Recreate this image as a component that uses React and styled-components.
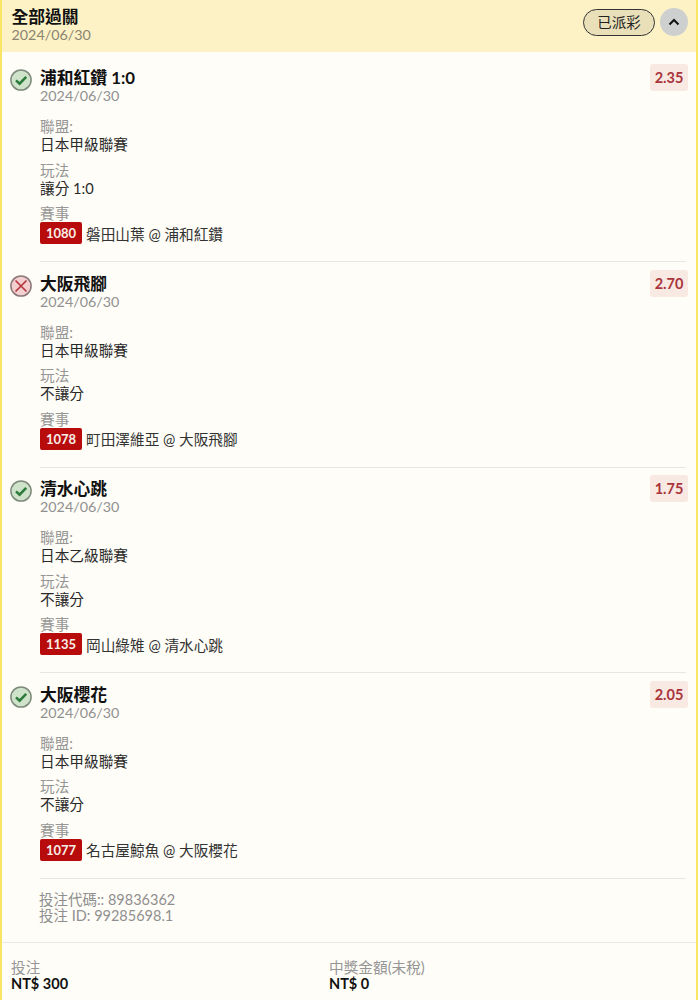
import React from "react";
import styled, { createGlobalStyle } from "styled-components";

const Global = createGlobalStyle`
  html, body { margin: 0; padding: 0; background: #fffdf7; }
  body { font-family: Lato, "Noto Sans CJK TC", sans-serif; }
`;
const Card = styled.div`
  width: 698px; height: 1000px; box-sizing: border-box; overflow: hidden;
  border-left: 2px solid #f9e463; border-right: 2px solid #f9e463;
  background: #fffdf7;
`;
const Header = styled.div`
  height: 52px; box-sizing: border-box; background: #fdf1c6;
  padding: 7px 8px 0 9.5px; display: flex; justify-content: space-between;
`;
const HeadTitle = styled.div`font-size: 16.8px; line-height: 20px; font-weight: 700; color: #111;`;
const HeadDate = styled.div`font-size: 14.3px; line-height: 16px; color: #8a8470;`;
const HeadRight = styled.div`display: flex; align-items: center; gap: 5px; height: 30px;`;
const Pill = styled.div`
  width: 72px; height: 27px; box-sizing: border-box; border: 1px solid #333; border-radius: 14px;
  background: #e9e0ba; font-size: 14.5px; line-height: 25px; text-align: center; color: #222;
`;
const Toggle = styled.div`
  width: 28px; height: 28px; border-radius: 50%; background: #ced0cf;
  display: flex; align-items: center; justify-content: center;
`;
const List = styled.div`padding: 16px 8px 0 8px;`;
const Item = styled.div`
  display: flex; gap: 8px; padding-bottom: 17px;
`;
const Badge = styled.div`width: 22px; flex: none; padding-top: 1px; height: 22px;`;
const Body = styled.div`flex: 1; min-width: 0;`;
const TitleRow = styled.div`display: flex; justify-content: space-between;`;
const Title = styled.div`font-size: 16.8px; line-height: 20px; font-weight: 700; color: #111;`;
const Odds = styled.div`
  background: #f8e9e2; color: #a8343c; font-size: 14.5px; font-weight: 700;
  height: 27px; line-height: 27px; padding: 0 4px; width: 30px; text-align: center;
  border-radius: 3px; margin-top: -4px; margin-bottom: -4px;
`;
const DateText = styled.div`font-size: 14.3px; line-height: 16px; color: #909090; margin-bottom: 14px;`;
const Label = styled.div`font-size: 14.67px; line-height: 17px; color: #969696;`;
const Value = styled.div`font-size: 14.67px; line-height: 19px; color: #2a2a2a; margin-bottom: 7.5px;`;
const Game = styled.div`display: flex; align-items: center; gap: 4px; font-size: 14.67px; color: #333; height: 22px;`;
const Code = styled.span`
  background: #b80c0c; color: #f8eee8; font-size: 13px; font-weight: 700; width: 42px; height: 22px;
  line-height: 22px; text-align: center; border-radius: 2px; display: inline-block;
`;
const Divider = styled.div`height: 1px; background: #e8e6e0; margin: 0 2px 11.67px 30px;`;
const Meta = styled.div`padding: 1px 0 0 37px; box-sizing: border-box; font-size: 14.5px; line-height: 16px; color: #8f8f8f; height: 51px;`;
const Foot = styled.div`
  border-top: 1px solid #ece9e2; padding: 16px 8px 0 9px; display: grid; grid-template-columns: 318px 1fr;
`;
const FootLabel = styled.div`font-size: 14.67px; line-height: 17px; color: #969696;`;
const FootValue = styled.div`font-size: 14.5px; line-height: 15px; font-weight: 700; color: #111;`;

const Win = () => (
  <svg width="22" height="22" viewBox="0 0 22 22">
    <circle cx="11" cy="11" r="10.1" fill="#cfe3cb" stroke="#7d8a7b" strokeWidth="1.5" />
    <path d="M6 11.3l3.6 3.4L16.2 7.8" fill="none" stroke="#2a7a3a" strokeWidth="2.5" />
  </svg>
);
const Lose = () => (
  <svg width="22" height="22" viewBox="0 0 22 22">
    <circle cx="11" cy="11" r="10.1" fill="#f3cfcf" stroke="#8a7778" strokeWidth="1.5" />
    <path d="M5.5 5.5l11 11M16.5 5.5l-11 11" fill="none" stroke="#b5333a" strokeWidth="1.6" />
  </svg>
);

const bets = [
  { win: true, title: "浦和紅鑽 1:0", odds: "2.35", league: "日本甲級聯賽", play: "讓分 1:0", code: "1080", game: "磐田山葉 @ 浦和紅鑽" },
  { win: false, title: "大阪飛腳", odds: "2.70", league: "日本甲級聯賽", play: "不讓分", code: "1078", game: "町田澤維亞 @ 大阪飛腳" },
  { win: true, title: "清水心跳", odds: "1.75", league: "日本乙級聯賽", play: "不讓分", code: "1135", game: "岡山綠雉 @ 清水心跳" },
  { win: true, title: "大阪櫻花", odds: "2.05", league: "日本甲級聯賽", play: "不讓分", code: "1077", game: "名古屋鯨魚 @ 大阪櫻花" },
];

export default function App() {
  return (
    <Card>
      <Global />
      <Header>
        <div>
          <HeadTitle>全部過關</HeadTitle>
          <HeadDate>2024/06/30</HeadDate>
        </div>
        <HeadRight>
          <Pill>已派彩</Pill>
          <Toggle>
            <svg width="12" height="8" viewBox="0 0 12 8"><path d="M1.5 6.5L6 2l4.5 4.5" fill="none" stroke="#111" strokeWidth="2" /></svg>
          </Toggle>
        </HeadRight>
      </Header>
      <List>
        {bets.map((b) => (
          <React.Fragment key={b.code}>
            <Item>
              <Badge>{b.win ? <Win /> : <Lose />}</Badge>
              <Body>
                <TitleRow>
                  <Title>{b.title}</Title>
                  <Odds>{b.odds}</Odds>
                </TitleRow>
                <DateText>2024/06/30</DateText>
                <Label>聯盟:</Label>
                <Value>{b.league}</Value>
                <Label>玩法</Label>
                <Value>{b.play}</Value>
                <Label>賽事</Label>
                <Game><Code>{b.code}</Code>{b.game}</Game>
              </Body>
            </Item>
            <Divider />
          </React.Fragment>
        ))}
      </List>
      <Meta>投注代碼:: 89836362<br />投注 ID: 99285698.1</Meta>
      <Foot>
        <div><FootLabel>投注</FootLabel><FootValue>NT$ 300</FootValue></div>
        <div><FootLabel>中獎金額(未稅)</FootLabel><FootValue>NT$ 0</FootValue></div>
      </Foot>
    </Card>
  );
}
